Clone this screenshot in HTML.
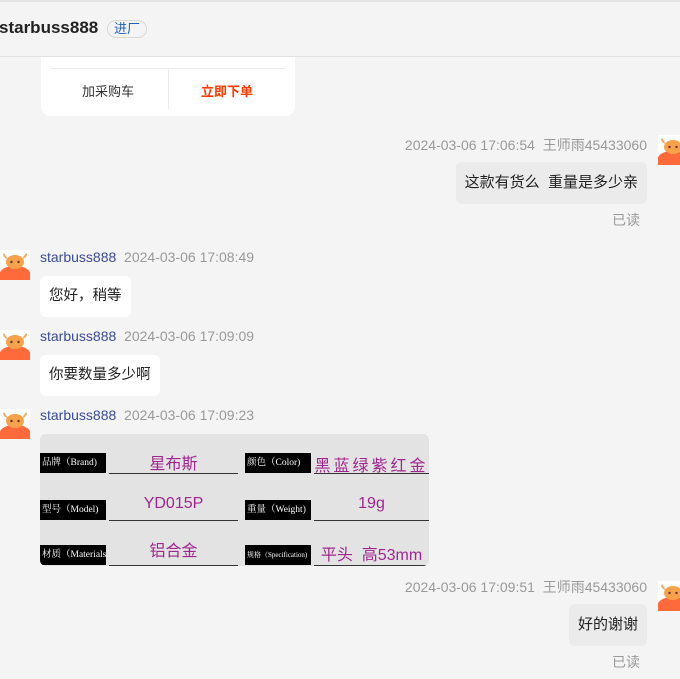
<!DOCTYPE html>
<html><head><meta charset="utf-8"><style>
body{margin:0;width:680px;height:679px;background:#f4f4f4;font-family:"Liberation Sans","Noto Sans CJK SC",sans-serif;position:relative;overflow:hidden}
.a{position:absolute}
.top{left:0;top:0;width:680px;height:2px;background:#e3e3e3}
.hdr{left:0;top:2px;width:680px;height:54px;border-bottom:1px solid #e2e2e2;background:#f4f4f4}
.name{left:-1px;top:18px;font-size:17px;font-weight:bold;color:#222}
.tag{left:107px;top:20px;width:38px;height:16px;border:1px solid #d8d8d8;border-radius:9px;font-size:13px;color:#1f5fbf;text-align:center;line-height:16px}
.card{left:41px;top:57px;width:254px;height:59px;background:#fff;border-radius:0 0 10px 10px}
.meta{font-size:14px;color:#999;white-space:nowrap}
.nm{color:#3a4a9c}
.bl{background:#fff;border-radius:6px;font-size:14.5px;color:#222;padding:0 9px;height:41px;line-height:41px;white-space:nowrap}
.br{background:#ebebeb;border-radius:6px;font-size:15px;color:#222;height:42px;line-height:42px;padding:0 9px;white-space:nowrap}
.rd{font-size:14px;color:#999}
.av{width:30px;height:30px}
.lab{background:#000;color:#fff;font-family:"Liberation Serif","Noto Serif CJK SC",serif;font-size:9.5px;height:20px;line-height:20px;white-space:nowrap;overflow:hidden;padding-left:2px}
.val{color:#a0258f;font-size:16px;border-bottom:1px solid #333;text-align:center}
</style></head><body>
<div class="a top"></div>
<div class="a hdr"></div>
<div class="a name">starbuss888</div>
<div class="a tag">进厂</div>
<div class="a card">
 <div class="a" style="left:9px;top:11px;width:236px;height:1px;background:#ececec"></div>
 <div class="a" style="left:127px;top:12px;width:1px;height:40px;background:#ececec"></div>
 <div class="a" style="left:41px;top:24px;font-size:13px;color:#333">加采购车</div>
 <div class="a" style="left:160px;top:24px;font-size:13px;color:#ff3b00;font-weight:bold">立即下单</div>
</div>

<svg width="0" height="0" style="position:absolute"><defs><g id="bull">
<rect width="30" height="30" fill="#fff"/>
<path d="M0 30 L0 22 Q4 16 15 16 Q26 16 30 22 L30 30Z" fill="#ff6a3a"/>
<path d="M6 6 Q4 2 3 4 Q3 8 8 9Z M24 6 Q26 2 27 4 Q27 8 22 9Z" fill="#f0b070"/>
<ellipse cx="15" cy="12" rx="9" ry="7" fill="#f6a24a"/>
<circle cx="11.5" cy="12" r="1.2" fill="#633"/><circle cx="18.5" cy="12" r="1.2" fill="#633"/>
</g></defs></svg>

<svg class="a av" style="left:658px;top:135px" viewBox="0 0 30 30"><use href="#bull"/></svg>
<div class="a meta" style="right:33px;top:135px">2024-03-06 17:06:54&nbsp;&nbsp;王师雨45433060</div>
<div class="a br" style="right:33px;top:162px">这款有货么&nbsp;&nbsp;重量是多少亲</div>
<div class="a rd" style="left:612px;top:210px">已读</div>

<svg class="a av" style="left:0;top:250px" viewBox="0 0 30 30"><use href="#bull"/></svg>
<div class="a meta" style="left:40px;top:249px"><span class="nm">starbuss888</span>&nbsp;&nbsp;2024-03-06 17:08:49</div>
<div class="a bl" style="left:40px;top:276px">您好，稍等</div>

<svg class="a av" style="left:0;top:330px" viewBox="0 0 30 30"><use href="#bull"/></svg>
<div class="a meta" style="left:40px;top:328px"><span class="nm">starbuss888</span>&nbsp;&nbsp;2024-03-06 17:09:09</div>
<div class="a bl" style="left:40px;top:355px">你要数量多少啊</div>

<svg class="a av" style="left:0;top:409px" viewBox="0 0 30 30"><use href="#bull"/></svg>
<div class="a meta" style="left:40px;top:407px"><span class="nm">starbuss888</span>&nbsp;&nbsp;2024-03-06 17:09:23</div>
<div class="a" style="left:40px;top:434px;width:389px;height:132px;background:#e3e3e3;border-radius:6px;overflow:hidden">
 <div class="a lab" style="left:0;top:19px;width:64px">品牌（Brand)</div>
 <div class="a val" style="left:69px;top:16px;width:129px;height:23px">星布斯</div>
 <div class="a lab" style="left:205px;top:19px;width:64px">颜色（Color)</div>
 <div class="a val" style="left:274px;top:18px;width:115px;height:21px;letter-spacing:3px">黑蓝绿紫红金</div>
 <div class="a lab" style="left:0;top:66px;width:64px">型号（Model)</div>
 <div class="a val" style="left:69px;top:61px;width:129px;height:25px">YD015P</div>
 <div class="a lab" style="left:205px;top:66px;width:64px">重量（Weight)</div>
 <div class="a val" style="left:274px;top:61px;width:115px;height:25px">19g</div>
 <div class="a lab" style="left:0;top:111px;width:64px">材质（Materials)</div>
 <div class="a val" style="left:69px;top:103px;width:129px;height:28px">铝合金</div>
 <div class="a lab" style="left:205px;top:111px;width:64px;font-size:7px">规格（Specification)</div>
 <div class="a val" style="left:274px;top:107px;width:115px;height:24px">平头&nbsp;&nbsp;高53mm</div>
</div>

<svg class="a av" style="left:658px;top:581px" viewBox="0 0 30 30"><use href="#bull"/></svg>
<div class="a meta" style="right:33px;top:577px">2024-03-06 17:09:51&nbsp;&nbsp;王师雨45433060</div>
<div class="a br" style="right:33px;top:604px">好的谢谢</div>
<div class="a rd" style="left:612px;top:652px">已读</div>
</body></html>
